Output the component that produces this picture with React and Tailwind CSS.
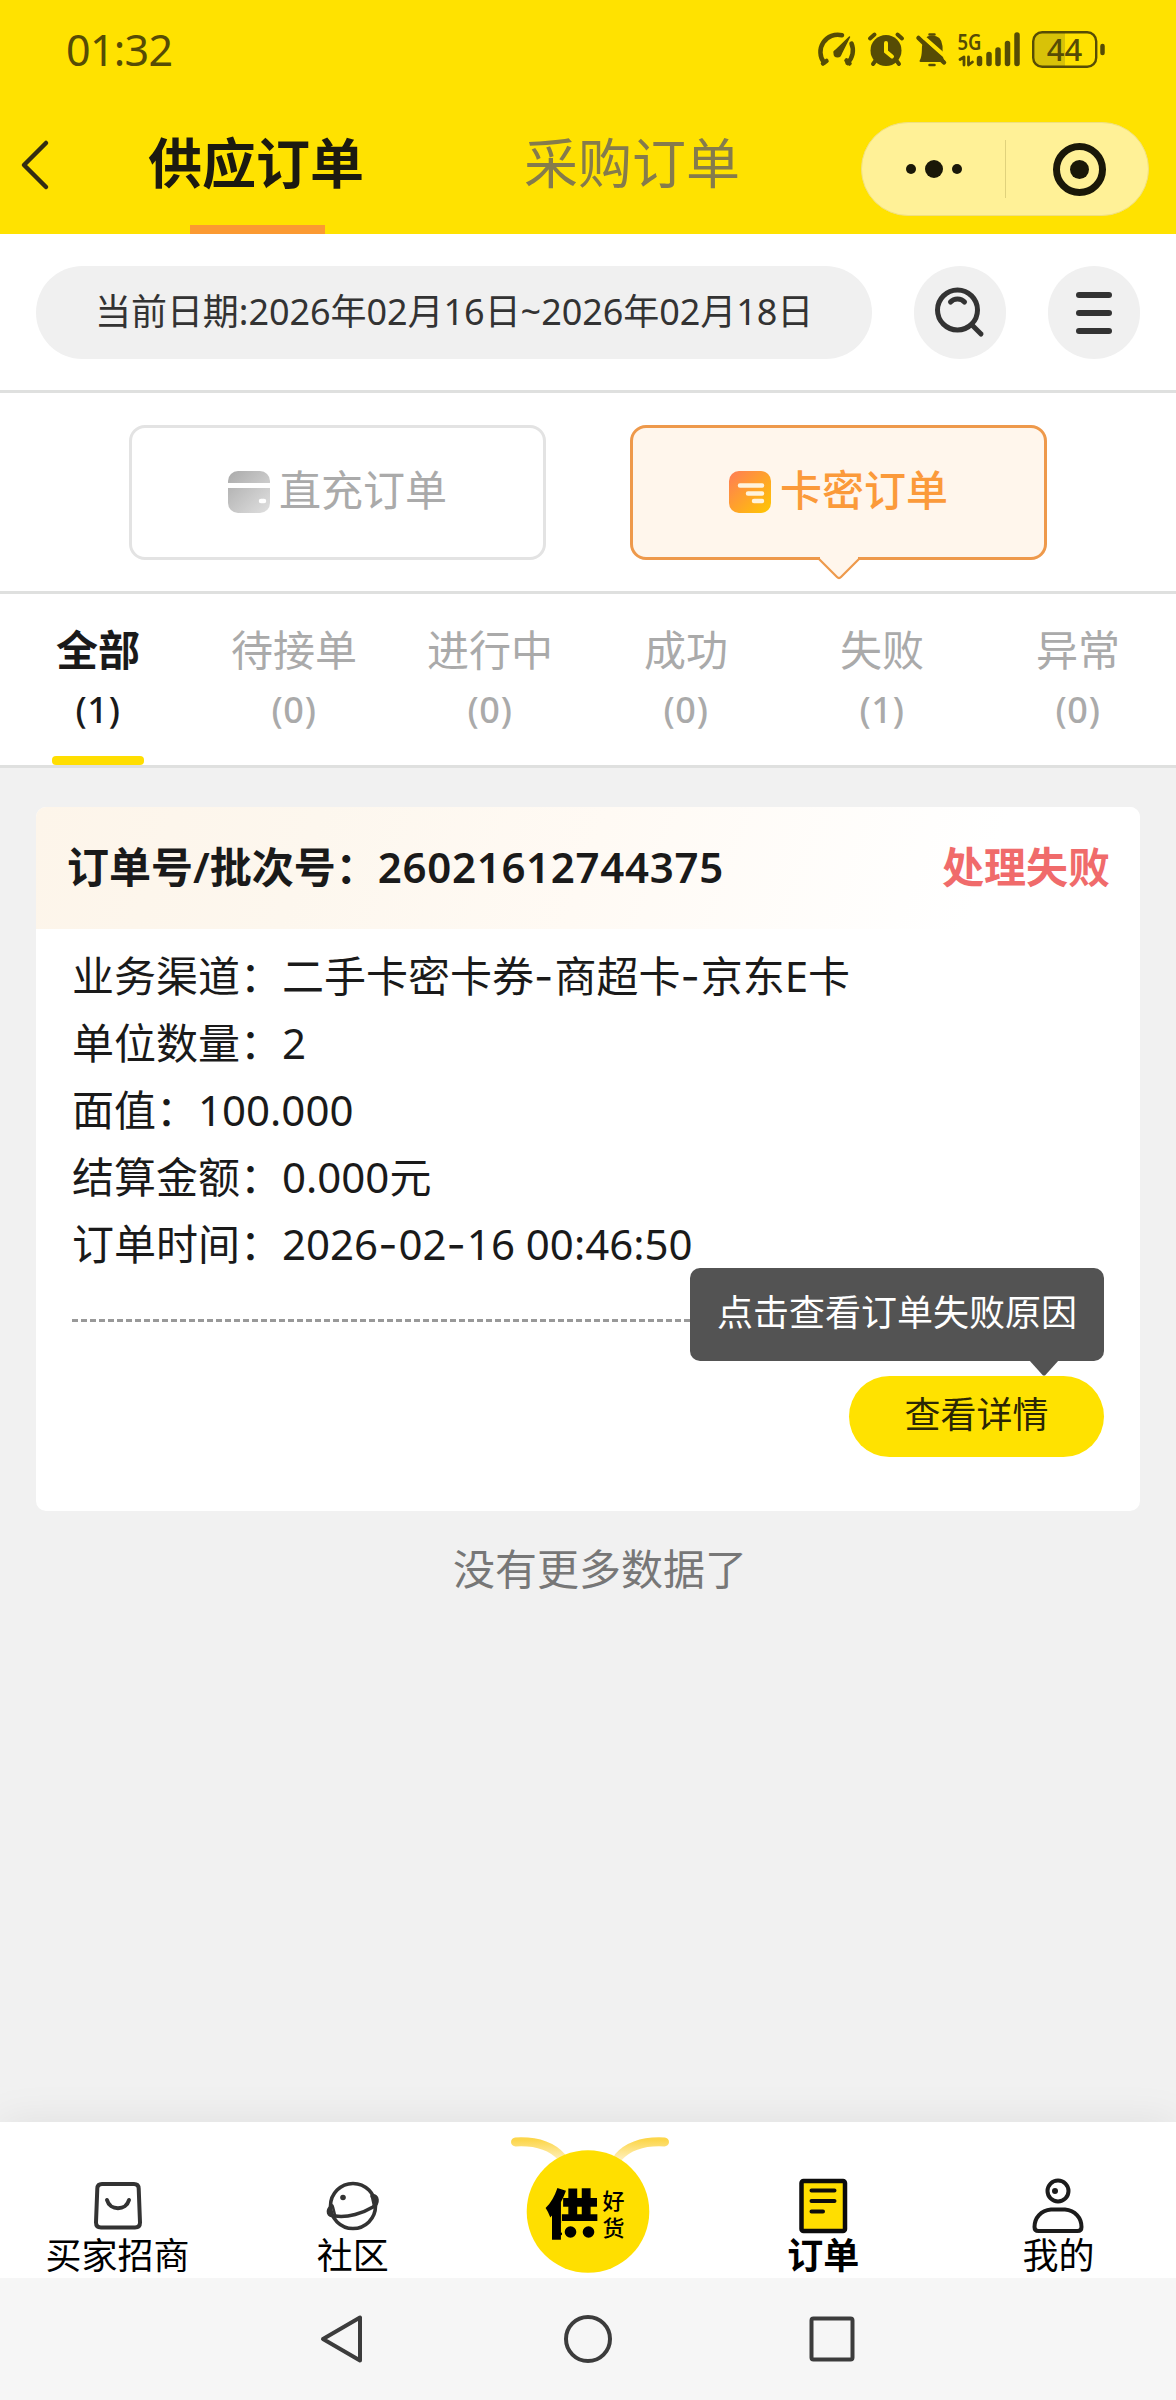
import { Fragment } from "react";

const statuses = [
  { name: "全部", count: 1 },
  { name: "待接单", count: 0 },
  { name: "进行中", count: 0 },
  { name: "成功", count: 0 },
  { name: "失败", count: 1 },
  { name: "异常", count: 0 },
];

const details = [
  { label: "业务渠道", value: "二手卡密卡券-商超卡-京东E卡" },
  { label: "单位数量", value: "2" },
  { label: "面值", value: "100.000" },
  { label: "结算金额", value: "0.000元" },
  { label: "订单时间", value: "2026-02-16 00:46:50" },
];

function StatusBar() {
  return (
    <div className="flex h-[100px] items-center justify-between pl-[66px] pr-[70px] text-[#564c05]">
      <span className="text-[43px] leading-[60px] tracking-[-0.700px]">01:32</span>
      <svg className="overflow-visible" width="290" height="60" viewBox="816 20 290 60" fill="none" stroke="currentColor" strokeLinecap="round">
        {/* speed gauge */}
        <path d="M824 62.500A17.300 17.300 0 0 1 842 35.200M851.500 43.500A17.500 17.500 0 0 1 847.500 63" strokeWidth="4.500" />
        <path d="M823 63.500l3.500-2.500M849.500 63.500l-3-3" strokeWidth="4.500" />
        <path d="M834 52L849.500 37L841 54z" fill="currentColor" strokeWidth="1.500" strokeLinejoin="round" />
        <circle cx="837.500" cy="53.500" r="4" fill="currentColor" stroke="none" />
        {/* alarm */}
        <circle cx="886" cy="50.500" r="15.500" fill="currentColor" stroke="none" />
        <path d="M870 38.500l4.500-4M902 38.500l-4.500-4M876 60l-3 4M896 60l3 4" strokeWidth="4" />
        <path d="M886 43v8.500l6 5" stroke="#ffe200" strokeWidth="4" />
        {/* muted bell */}
        <path d="M920.500 61h23c-3-5-1.500-11-2-15c-.6-6-4-9.500-9.500-9.500s-8.500 4-9 10c-.4 5 .5 9.500-2.500 14.500z" fill="currentColor" strokeWidth="2" strokeLinejoin="round" />
        <path d="M929.500 34.500h5M929.500 65h5" strokeWidth="2.500" />
        <path d="M921 35l25 22" stroke="#ffe200" strokeWidth="4" />
        <path d="M918.500 38l25.500 24.500" strokeWidth="4.500" />
        <text x="957.500" y="49.500" fontSize="22" fontWeight="600" fill="currentColor" stroke="none" textLength="24" lengthAdjust="spacingAndGlyphs">5G</text>
        <path d="M960 59.500l4-2.500v8M968.500 57v8l4-3" strokeWidth="2.800" strokeLinejoin="round" />
        <path d="M979.500 58.500v5M989 54.500v9M998 50v13.500M1007.500 43.500v20M1017 35v28.500" strokeWidth="5.500" />
        {/* battery */}
        <path d="M1042 33h23v33h-23a8 8 0 0 1-8-8v-17a8 8 0 0 1 8-8z" fill="#d8c208" stroke="none" />
        <rect x="1033.200" y="32.200" width="63" height="34.500" rx="9" strokeWidth="2.400" />
        <path d="M1102.500 46v7" strokeWidth="4.500" />
        <text x="1064.500" y="60.500" textAnchor="middle" fontSize="31" fontWeight="500" fill="currentColor" stroke="none">44</text>
      </svg>
    </div>
  );
}

function Header() {
  return (
    <header className="bg-[#ffe200]">
      <StatusBar />
      <div className="flex h-[134px] items-start">
        <svg className="ml-[19px] mt-[38px]" width="32" height="54" viewBox="0 0 32 54" fill="none" stroke="#332d12" strokeWidth="4.500" strokeLinecap="round" strokeLinejoin="round">
          <path d="M27 5L5 27l22 22" />
        </svg>
        <div className="ml-[97px] flex h-full w-[216px] flex-col justify-between">
          <span className="mt-[27px] text-[54px] font-bold leading-[72px] text-[#1c1a10]">供应订单</span>
          <div className="ml-[42px] h-[9px] w-[135px] bg-[#fb9a32]" />
        </div>
        <span className="ml-[160px] mt-[27px] w-[216px] text-[54px] leading-[72px] text-[#857b4c]">采购订单</span>
        <div className="ml-[121px] mt-[22px] flex h-[94px] w-[288px] items-center rounded-full border border-[#f0e080] bg-[#fff197]">
          <div className="flex w-[143px] items-center justify-center gap-[9px]">
            <i className="size-[10px] rounded-full bg-[#1a1808]" />
            <i className="size-[18px] rounded-full bg-[#1a1808]" />
            <i className="size-[10px] rounded-full bg-[#1a1808]" />
          </div>
          <div className="h-[58px] w-px bg-[#e0d27c]" />
          <div className="flex flex-1 items-center justify-center pl-[5px]">
            <div className="flex size-[53px] items-center justify-center rounded-full border-[7px] border-[#1a1808]">
              <i className="size-[19px] rounded-full bg-[#1a1808]" />
            </div>
          </div>
        </div>
      </div>
    </header>
  );
}

function FilterBar() {
  return (
    <div className="flex h-[159px] gap-[42px] border-b-[3px] border-[#dfe0df] bg-white px-9 pt-8">
      <div className="h-[93px] w-[836px] rounded-full bg-[#f0f0f0] pl-[59px] text-[36px] leading-[91px] tracking-[-0.050px] text-[#333]">
        当前日期:2026年02月16日~2026年02月18日
      </div>
      <button className="flex h-[93px] w-[92px] items-center justify-center rounded-full bg-[#f0f0f0]">
        <svg width="52" height="52" viewBox="934 287 52 52" fill="none" stroke="#333" strokeWidth="5" strokeLinecap="round">
          <circle cx="957.500" cy="310" r="20" />
          <path d="M972 325l9 9" />
          <path d="M950.500 302c3.500-4 10.500-4 14 0" />
        </svg>
      </button>
      <button className="flex h-[93px] w-[92px] flex-col items-center justify-center gap-3 rounded-full bg-[#f0f0f0]">
        <i className="h-1.5 w-9 rounded-full bg-[#333]" />
        <i className="h-1.5 w-9 rounded-full bg-[#333]" />
        <i className="h-1.5 w-9 rounded-full bg-[#333]" />
      </button>
    </div>
  );
}

function TypeTabs() {
  return (
    <div className="flex h-[201px] justify-center gap-[84px] border-b-[3px] border-[#dfe0df] bg-white pt-8">
      <button className="flex h-[135px] w-[417px] items-center justify-center gap-[9px] rounded-2xl border-[3px] border-[#e3e3e3] text-[42px] leading-[60px] text-[#aaa]">
        <svg className="-mt-0.5" width="42" height="42" viewBox="0 0 42 42">
          <defs>
            <linearGradient id="gray" x1="0" y1="0" x2="1" y2="1">
              <stop stopColor="#aaa" />
              <stop offset="1" stopColor="#e0e0e0" />
            </linearGradient>
          </defs>
          <rect width="42" height="42" rx="10" fill="url(#gray)" />
          <path d="M0 14.500h42" stroke="#fff" strokeWidth="5" />
          <path d="M33 30h3" stroke="#fff" strokeWidth="4.500" strokeLinecap="round" />
        </svg>
        <span className="-mt-1.5">直充订单</span>
      </button>
      <button className="relative flex h-[135px] w-[417px] items-center justify-center gap-[9px] rounded-2xl border-[3px] border-[#ee994b] bg-[#fff6ec] text-[42px] font-medium leading-[60px] text-[#fb9a3a]">
        <svg className="-mt-0.5" width="42" height="42" viewBox="0 0 42 42">
          <defs>
            <linearGradient id="orange" x1="0" y1="0" x2="1" y2="1">
              <stop stopColor="#ff7c56" />
              <stop offset="1" stopColor="#ffc800" />
            </linearGradient>
          </defs>
          <rect width="42" height="42" rx="10" fill="url(#orange)" />
          <path d="M11 14.500h22M19 22.500h14M25 30h8" stroke="#fff3dc" strokeWidth="4.500" strokeLinecap="round" />
        </svg>
        <span className="-mt-1.5">卡密订单</span>
        <svg className="absolute left-[184px] top-[128px]" width="44" height="24" viewBox="0 0 44 24">
          <path d="M3 0h38v4L24 21q-2 2-4 0L3 4z" fill="#fff6ec" />
          <path d="M2 3L20 21q2 2 4 0L42 3" fill="none" stroke="#ee994b" strokeWidth="2.200" />
        </svg>
      </button>
    </div>
  );
}

function StatusTabs() {
  return (
    <div className="grid h-[174px] grid-cols-6 border-b-[3px] border-[#dfe0df] bg-white">
      {statuses.map((s, i) => (
        <div key={s.name} className={`flex flex-col items-center ${i === 0 ? "text-[#1a1a1a]" : "text-[#aaa]"}`}>
          <span className={`mt-[26px] text-[42px] leading-[60px] ${i === 0 ? "font-bold" : ""}`}>{s.name}</span>
          <span className="text-[36px] font-medium leading-[60px] tracking-[0.700px]">({s.count})</span>
          {i === 0 && <div className="mt-auto h-[9px] w-[92px] rounded-[4px] bg-[#ffde00]" />}
        </div>
      ))}
    </div>
  );
}

function Value({ text }) {
  return (
    <span>
      {text.split("-").map((part, i) => (
        <Fragment key={i}>
          {i > 0 && <span className="font-['Inter'] leading-none tracking-[1px]">-</span>}
          {part}
        </Fragment>
      ))}
    </span>
  );
}

function OrderCard() {
  return (
    <div className="mx-9 mt-[39px] h-[704px] overflow-hidden rounded-[10px] bg-white">
      <div className="flex h-[122px] items-center justify-between bg-[linear-gradient(110deg,#fdf5ea_0%,#fdf7ee_25%,#fffaf4_50%,#fff_85%)] pb-[3px] pl-[31px] pr-[30px] text-[42px] font-semibold leading-[60px] text-[#1a1a1a]">
        <span className="flex">
          订单号/批次号：<span className="tracking-[0.700px]">26021612744375</span>
        </span>
        <span className="text-[#f06b6b]">处理失败</span>
      </div>
      <div className="px-9 pt-[13px]">
        {details.map((d) => (
          <div key={d.label} className="flex h-[67px] text-[42px] leading-[67px] text-[#1a1a1a]">
            <span>{d.label}：</span>
            <Value text={d.value} />
          </div>
        ))}
        <div className="mt-[42px] h-[3px] bg-[repeating-linear-gradient(90deg,#999_0_6px,transparent_6px_9px)]" />
        <div className="relative mt-[54px] flex justify-end">
          <button className="h-[81px] w-[255px] rounded-full bg-[#ffe200] pb-1 text-[36px] leading-[76px] text-[#2b2605]">查看详情</button>
          <div className="absolute bottom-[96px] right-0 h-[93px] w-[414px] rounded-[10px] bg-[#535353] text-center text-[36px] leading-[89px] text-white">
            点击查看订单失败原因
            <svg className="absolute right-[45px] top-[92px]" width="30" height="16" viewBox="0 0 30 16" fill="#535353">
              <path d="M0 0h30L16 15.500h-2z" />
            </svg>
          </div>
        </div>
      </div>
    </div>
  );
}

function BeeLogo() {
  return (
    <svg width="166" height="140" viewBox="505 2134 166 140">
      <defs>
        <linearGradient id="antenna" gradientUnits="userSpaceOnUse" x1="0" y1="2140" x2="0" y2="2160">
          <stop stopColor="#fcd64c" />
          <stop offset="1" stopColor="#fff0bd" />
        </linearGradient>
      </defs>
      <path d="M515.500 2142c18-1 34 2 46 15" fill="none" stroke="url(#antenna)" strokeWidth="9" strokeLinecap="round" />
      <path d="M664.500 2142c-18-1-34 2-46 15" fill="none" stroke="url(#antenna)" strokeWidth="9" strokeLinecap="round" />
      <circle cx="588" cy="2211.500" r="61.300" fill="#ffdf00" />
      <text x="546" y="2234" fontSize="52" fontWeight="900" stroke="#000" strokeWidth="1.500">供</text>
      <rect x="562" y="2221" width="40" height="22" fill="#ffdf00" />
      <circle cx="570.500" cy="2232" r="5.800" />
      <circle cx="588.500" cy="2232" r="5.800" />
      <text x="602.500" y="2209" fontSize="22" fontWeight="500">好</text>
      <text x="602.500" y="2235.500" fontSize="22" fontWeight="500">货</text>
    </svg>
  );
}

function TabBar() {
  return (
    <nav className="grid h-[156px] grid-cols-5 bg-white text-center text-[36px] leading-[48px] text-black shadow-[0_0_40px_rgba(0,0,0,0.08)]">
      <div className="flex flex-col items-center pt-[54px]">
        <svg width="60" height="56" viewBox="88 2176 60 56" fill="none" stroke="#333" strokeWidth="4" strokeLinecap="round">
          <path d="M102 2184h32q4.500 0 4.700 4.500l1.300 34q0 5-5 5h-34q-5 0-5-5l1.300-34q.2-4.500 4.700-4.500z" />
          <path d="M107 2200c3 11 19 11 22 0" />
        </svg>
        <span>买家招商</span>
      </div>
      <div className="flex flex-col items-center pt-[54px]">
        <svg width="60" height="56" viewBox="323 2176 60 56" fill="none" stroke="#333" strokeWidth="3.600" strokeLinecap="round">
          <circle cx="353" cy="2206" r="22.500" />
          <path d="M332 2206c-6 5-4 10 3 10c13 2 28-3 38-9c6-4 5-12-1-11" />
          <path d="M333 2207l2 8M372 2197l2 9" strokeWidth="2.500" />
          <circle cx="343" cy="2197.500" r="2.800" fill="#333" stroke="none" />
        </svg>
        <span>社区</span>
      </div>
      <div className="flex flex-col items-center pt-3">
        <BeeLogo />
      </div>
      <div className="flex flex-col items-center pt-[54px] font-bold">
        <svg width="60" height="58" viewBox="793 2176 60 58" className="-mb-0.5" fill="none" stroke="#0c0c0c" strokeWidth="4.500" strokeLinecap="round">
          <rect x="801.500" y="2181" width="43.500" height="50" rx="2" fill="#ffde00" />
          <path d="M811.500 2190.500h23M811.500 2201h23M811.500 2211.500h11.500" strokeWidth="4" />
        </svg>
        <span>订单</span>
      </div>
      <div className="flex flex-col items-center pt-[54px]">
        <svg width="60" height="58" viewBox="1028 2176 60 58" className="-mb-0.5" fill="none" stroke="#1c1c1c" strokeWidth="4" strokeLinejoin="round">
          <circle cx="1058" cy="2191" r="10.500" />
          <circle cx="1055" cy="2191" r="3" fill="#1c1c1c" stroke="none" />
          <path d="M1051 2209.500h14c10 1 16.500 8 16.500 17.500q0 4-4 4h-39q-4 0-4-4c0-9.500 6.500-16.500 16.500-17.500z" />
        </svg>
        <span>我的</span>
      </div>
    </nav>
  );
}

function SystemNav() {
  return (
    <div className="flex h-[122px] items-center justify-center gap-[194px] bg-[#f6f6f6]">
      <svg width="50" height="50" viewBox="0 0 50 50" fill="none" stroke="#3c3c3c" strokeWidth="4" strokeLinejoin="round">
        <path d="M41 3.500v43L4 25z" />
      </svg>
      <svg width="50" height="50" viewBox="0 0 50 50" fill="none" stroke="#3c3c3c" strokeWidth="4">
        <circle cx="25" cy="25" r="22" />
      </svg>
      <svg width="50" height="50" viewBox="0 0 50 50" fill="none" stroke="#3c3c3c" strokeWidth="4">
        <rect x="4.500" y="4.500" width="41" height="41" rx="2" />
      </svg>
    </div>
  );
}

export default function App() {
  return (
    <div className="flex h-[2400px] w-[1176px] flex-col overflow-hidden bg-[#f1f1f1] font-['Noto_Sans','Noto_Sans_CJK_SC',sans-serif]">
      <Header />
      <FilterBar />
      <TypeTabs />
      <StatusTabs />
      <OrderCard />
      <p className="mt-[28px] pl-[24px] text-center text-[42px] leading-[60px] text-[#777]">没有更多数据了</p>
      <div className="mt-auto">
        <TabBar />
        <SystemNav />
      </div>
    </div>
  );
}
